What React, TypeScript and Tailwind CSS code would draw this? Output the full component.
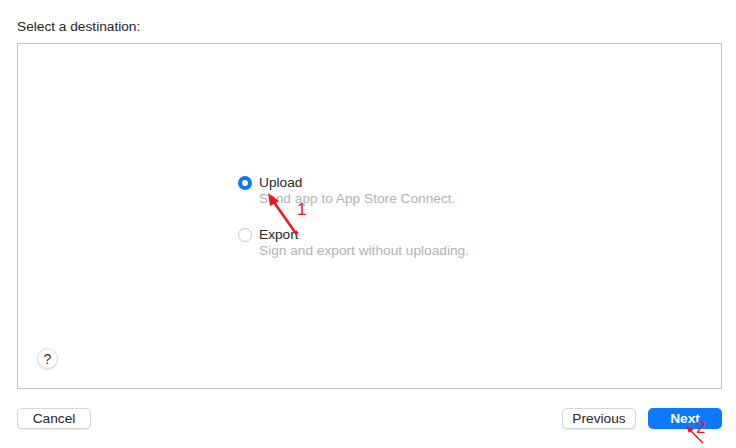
export default function App() {
  return (
    <div
      className="relative w-[736px] h-[448px] bg-white text-[13.7px] text-[#262626] overflow-hidden"
      style={{ fontFamily: '"Liberation Sans", Arial, sans-serif' }}
    >
      <div className="px-[17px] pt-[19px] leading-[16px]">Select a destination:</div>

      <div className="mx-[17px] mt-[8px] w-[705px] h-[346px] border border-[#c4c4c4] flex flex-col">
        <div className="ml-[220px] mt-[131px] flex flex-col">
          <div className="flex items-start gap-[7px]">
            <span className="mt-[1px] w-[14px] h-[14px] rounded-full bg-[#0a7aff] flex items-center justify-center shrink-0">
              <span className="w-[6px] h-[6px] rounded-full bg-white" />
            </span>
            <div className="flex flex-col">
              <span className="leading-[16px]">Upload</span>
              <span className="leading-[16px] text-[#b3b3b3]">Send app to App Store Connect.</span>
            </div>
          </div>
          <div className="flex items-start gap-[7px] mt-[20px]">
            <span className="mt-[1px] w-[14px] h-[14px] rounded-full bg-white border border-[#c8c8c8] shrink-0" />
            <div className="flex flex-col">
              <span className="leading-[16px]">Export</span>
              <span className="leading-[16px] text-[#b3b3b3]">Sign and export without uploading.</span>
            </div>
          </div>
        </div>

        <div className="mt-auto ml-[19px] mb-[19px] w-[21px] h-[21px] rounded-full bg-white border border-[#dcdcdc] shadow-[0_1px_1px_rgba(0,0,0,0.12)] flex items-center justify-center text-[14px] leading-none text-[#333]">
          ?
        </div>
      </div>

      <div className="flex items-center pl-[17px] pr-[14px] mt-[19px]">
        <button className="w-[74px] h-[21px] rounded-[5px] bg-white border border-[#d6d6d6] shadow-[0_1px_1px_rgba(0,0,0,0.1)] text-[13.7px] leading-none text-[#262626]">
          Cancel
        </button>
        <div className="flex-1" />
        <button className="w-[74px] h-[21px] rounded-[5px] bg-white border border-[#d6d6d6] shadow-[0_1px_1px_rgba(0,0,0,0.1)] text-[13.7px] leading-none text-[#262626]">
          Previous
        </button>
        <button className="ml-[12px] w-[74px] h-[21px] rounded-[5px] bg-[#0a7aff] text-[13.7px] leading-none text-white font-semibold">
          Next
        </button>
      </div>

      <svg className="absolute left-0 top-0 pointer-events-none" width="736" height="448">
        <line x1="297" y1="235" x2="271" y2="198" stroke="#f0141e" strokeWidth="2.5" />
        <polygon points="268,193 279,201 270,206" fill="#f0141e" />
        <line x1="703" y1="443" x2="689" y2="429" stroke="#f0141e" strokeWidth="1.5" />
        <polygon points="686,426 694,429 689,433" fill="#f0141e" />
      </svg>
      <span className="absolute left-[297px] top-[201px] text-[17px] leading-none text-[#f0141e]">1</span>
      <span className="absolute left-[696px] top-[419px] text-[17px] leading-none text-[#f0141e]">2</span>
    </div>
  );
}
